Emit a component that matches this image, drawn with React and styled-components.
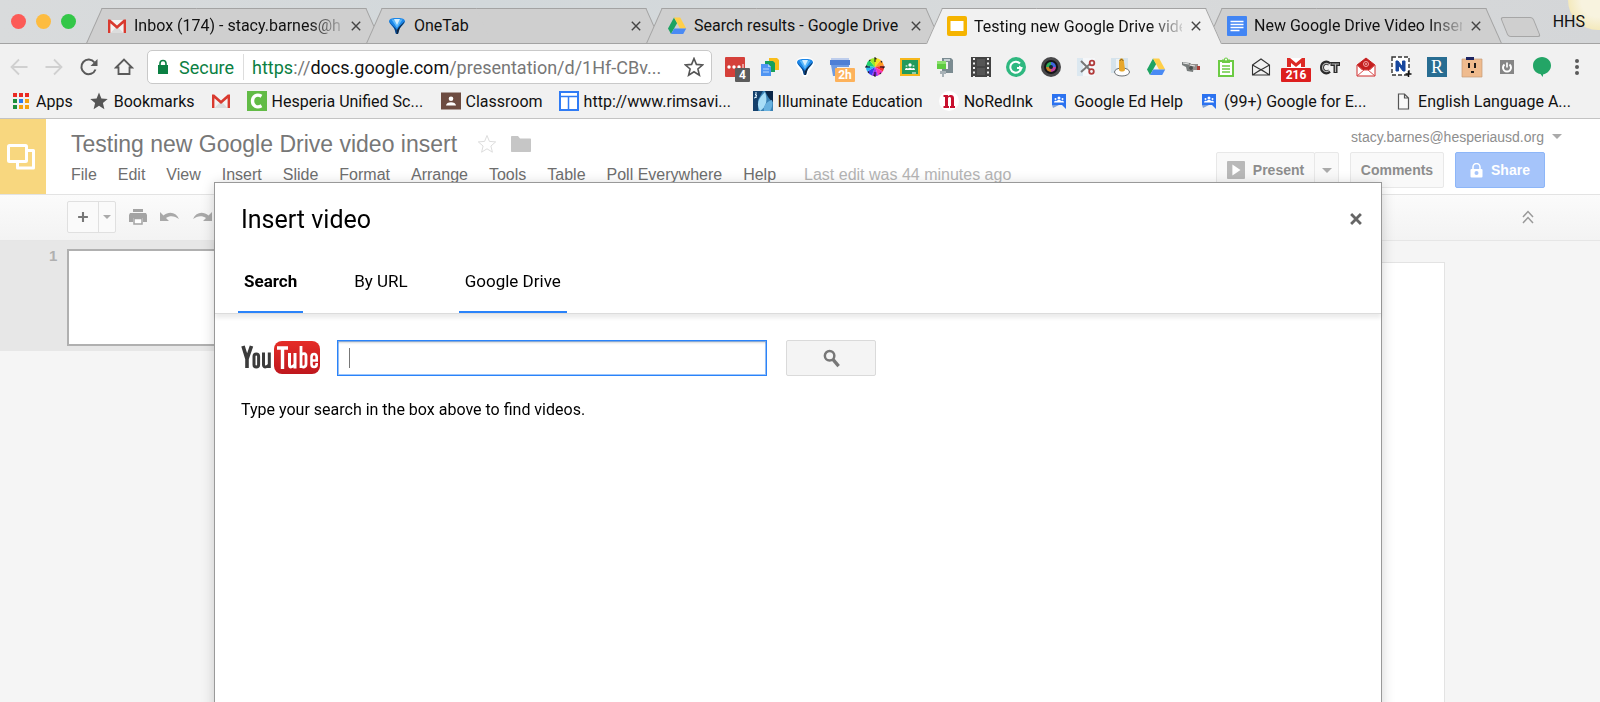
import React from 'react';
import styled, { createGlobalStyle, css } from 'styled-components';

const GlobalStyle = createGlobalStyle`
    * { box-sizing: border-box; }
    body {
        margin: 0;
        overflow: hidden;
        background: #f5f5f5;
    }
    button, input { font: inherit; color: inherit; }
    svg { display: block; flex: none; }
`;

/* ---------- icons ---------- */

function Svg({ size = 20, children, ...rest }) {
    return (
        <svg width={size} height={size} viewBox="0 0 20 20" fill="none" aria-hidden="true" {...rest}>
            {children}
        </svg>
    );
}

const GmailIcon = () => (
    <Svg>
        <path d="M1 4h18v13H1z" fill="#f3f3f3" />
        <path d="M3.500 17 9 11l1 1 1-1 5.500 6z" fill="#dcdcdc" />
        <path d="M1 3.500h2.200L10 9.600l6.800-6.100H19V17h-2.400V7.200L10 13 3.400 7.200V17H1z" fill="#d93a2f" />
    </Svg>
);

const OneTabIcon = ({ halo }) => (
    <Svg>
        {halo && <path d="M10 0c5 0 9 2 9 6 0 4-5 7-6 11-1 4-5 4-6 0C6 13 1 10 1 6c0-4 4-6 9-6z" fill="#fff" />}
        <path d="M2 5c1-3 4-3 8-3s7 0 8 3c0 3-4 5-5.500 8L11 18H9l-1.500-5C6 10 2 8 2 5z" fill="#1b86e8" />
        <path d="M2 5c1 3 4.500 5 5.500 8L9 18h1v-4C8 11 5 9 2 5z" fill="#0a3f7d" />
        <path d="M18 5c-1 3-4.500 5-5.500 8L11 18h-1v-4c1-3 4-5 8-9z" fill="#10253f" />
        <path d="M4.500 3.500h11L10 12z" fill="#5db9fa" />
        <path d="M7 3h6l-3 6z" fill="#d3eeff" />
    </Svg>
);

const DriveIcon = () => (
    <Svg>
        <path d="M7 1.500 1 12.500l3 5.500 6.200-11z" fill="#1ea362" />
        <path d="M7 1.500h6.200l6 11H13z" fill="#ffcf48" />
        <path d="M7.200 12.500h12l-3 5.500H4z" fill="#4a8af4" />
    </Svg>
);

const SlidesIcon = () => (
    <Svg>
        <rect width="20" height="20" rx="2" fill="#f5b400" />
        <path d="M3.500 5h13v10h-13z" fill="#fff" />
    </Svg>
);

const DocsIcon = () => (
    <Svg>
        <rect width="20" height="20" rx="1" fill="#4285f4" />
        <path d="M3.500 5.500h13M3.500 8.500h13M3.500 11.500h13M3.500 14.500h9" stroke="#fff" strokeWidth="1.600" />
    </Svg>
);

const AppsIcon = () => (
    <Svg>
        {['#ea2b24', '#ea2b24', '#ea2b24', '#1b8f3b', '#2a7bf0', '#f5a210', '#1b8f3b', '#f5a210', '#f5a210'].map((c, i) => (
            <rect key={i} x={2 + (i % 3) * 6} y={2 + Math.floor(i / 3) * 6} width="4" height="4" fill={c} />
        ))}
    </Svg>
);

const StarIcon = ({ fill = 'none', stroke, width = 1.6 }) => (
    <Svg>
        <path
            d="m10 1.500 2.400 5.900 6.300.5-4.800 4.100 1.500 6.200-5.400-3.400-5.400 3.400 1.500-6.200-4.800-4.100 6.300-.5z"
            fill={fill}
            stroke={stroke}
            strokeWidth={width}
        />
    </Svg>
);

const CIcon = () => (
    <Svg>
        <rect width="20" height="20" fill="#62bb46" />
        <path d="M14.500 5.200C9.500 2.500 5.500 5.500 5.500 10s4 7.500 9 4.800" stroke="#fff" strokeWidth="3.400" />
    </Svg>
);

const ClassroomMark = () => (
    <Svg>
        <path d="M0 1.500h20v17H0z" fill="#6d4c41" />
        <circle cx="10" cy="7.800" r="2.300" fill="#fff" />
        <path d="M5 14.500c0-4.500 10-4.500 10 0z" fill="#fff" />
    </Svg>
);

const SitesIcon = () => (
    <Svg>
        <path d="M1 1h18v18H1z" fill="#fff" stroke="#2f7bf5" strokeWidth="2" />
        <path d="M1 5.500h18M9.500 5.500V19" stroke="#2f7bf5" strokeWidth="1.500" />
    </Svg>
);

const IlluminateIcon = () => (
    <Svg>
        <path d="M0 0h20v20H0z" fill="#3a82b5" />
        <path d="M0 0h10L5 9v11H0z" fill="#14406c" />
        <path d="M12 0h8v11c-3-2-6-6-8-11z" fill="#0b2748" />
        <path d="M12 1C5 8 3 13 7 20c6-4 8-10 5-19z" fill="#a9def7" />
        <path d="M19 9c-6 2-9 6-8 11h6c2-3 3-7 2-11z" fill="#68b1df" />
        <path d="M2 3 4 5M1 7l3-1M3 1v5" stroke="#dff4ff" />
    </Svg>
);

const NoRedInkIcon = () => (
    <Svg>
        <circle cx="10" cy="10" r="10" fill="#fff" />
        <path d="M4.500 4H9v1.200c2-2 6-1.700 6 1.800v8h1V17h-5v-2h1V7.500c0-2-3-2-3 0V15h1v2H4.500v-2H6V6H4.500z" fill="#c8102e" />
    </Svg>
);

const GroupsIcon = () => (
    <Svg>
        <path d="M3 3h14v15l-4-4H3z" fill="#2b72f0" />
        <path d="M3 14h7l-6 3z" fill="#7da0d9" />
        <circle cx="10" cy="7" r="1.500" fill="#fff" />
        <circle cx="6.500" cy="8" r="1" fill="#fff" />
        <circle cx="13.500" cy="8" r="1" fill="#fff" />
        <path d="M5 11.500c0-2 2-2 2.500-1.500 1-1.500 4-1.500 5 0 .5-.5 2.500-.5 2.500 1.500z" fill="#fff" />
    </Svg>
);

const PageIcon = () => (
    <Svg>
        <path d="M5.500 3h6l4 4v11h-10zM11.500 3v4h4" stroke="#555" strokeWidth="1.200" fill="#fafafa" />
    </Svg>
);

const Badge = ({ x, y, w, h = 14, fill, children }) => (
    <g>
        <rect x={x} y={y} width={w} height={h} rx="1" fill={fill} />
        <text x={x + w / 2} y={y + 11} textAnchor="middle" fill="#fff" fontFamily="Roboto, sans-serif" fontWeight="700" fontSize="12">
            {children}
        </text>
    </g>
);

const extensions = [
    { name: 'Passwords', art: <>
        <rect width="20" height="20" rx="1" fill="#d5403a" />
        <circle cx="4" cy="10" r="1.700" fill="#fff" /><circle cx="9" cy="10" r="1.700" fill="#fff" /><circle cx="14" cy="10" r="1.700" fill="#fff" />
        <path d="M18 7v6" stroke="#fff" />
        <Badge x={10} y={11} w={15} fill="#5c5c5c">4</Badge>
    </> },
    { name: 'Copies', art: <>
        <path d="M9 1h8l2 2v10H9z" fill="#f9bd1b" /><path d="M5 4h8l2 2v9H5z" fill="#16a05d" />
        <path d="M1 7h7l3 3v9H1z" fill="#5095f3" /><path d="M3 12h6M3 15h6" stroke="#b8d6fb" />
        <path d="m8 7 3 3H8z" fill="#a8cbfb" />
    </> },
    { name: 'OneTab', icon: <OneTabIcon halo /> },
    { name: 'Timer', art: <>
        <path d="M0 3h20v5H0z" fill="#4e7fd5" /><path d="M1 8h18v2H7v9H3z" fill="#6e9be2" />
        <path d="M1 1h18v2H1z" fill="#bdcdec" />
        <Badge x={5} y={11} w={20} fill="#fdb25b">2h</Badge>
    </> },
    { name: 'Color wheel', art: <>
        {['#f7e11e', '#ff9a1f', '#f4332d', '#f432b8', '#9a2cf0', '#3a3cf0', '#28b6f0', '#1ed26a', '#9bea28'].map((c, i) => (
            <path key={c} d="M10 10V1a9 9 0 0 1 5.790 2.110z" fill={c} transform={`rotate(${i * 40} 10 10)`} />
        ))}
        <circle cx="10" cy="10" r="8.300" stroke="#222" strokeWidth="1.200" strokeDasharray="1.500 5" />
        <path d="M10 0v5M10 15v5M0 10h5M15 10h5" stroke="#111" />
    </> },
    { name: 'Share to Classroom', art: <>
        <path d="M0 1h20v18H0z" fill="#f5b71c" /><path d="M2 3h16v14H2z" fill="#229a5b" />
        <circle cx="10" cy="8" r="1.700" fill="#fff" /><circle cx="6.500" cy="9" r="1" fill="#a7dcbf" /><circle cx="13.500" cy="9" r="1" fill="#a7dcbf" />
        <path d="M5 13c0-2.500 2-2.500 3-1.500 1-1 3-1 4 0 1-1 3-1 3 1.500z" fill="#fff" /><path d="M12 16h4" stroke="#fff" />
    </> },
    { name: 'Screen capture', art: <>
        <path d="M7 1h9l2 2v13H7v-4h6V5H7z" fill="#7b8b91" /><path d="M9 2h6v2H9z" fill="#c5d0d4" />
        <path d="M2 4h9v8H2z" fill="#5fcb41" /><path d="M2 4h9v3H2z" fill="#8ce16f" />
        <path d="M5 14h6v3H5zM7 17h2v3H7z" fill="#a7b1b6" />
    </> },
    { name: 'Film', art: <>
        <path d="M0 0h20v20H0z" fill="#434343" />
        <path d="M3 1v19M17 1v19" stroke="#eee" strokeWidth="2" strokeDasharray="2 2.500" />
        <path d="M6 2h8v7H6zM6 11h8v7H6z" fill="#555" />
    </> },
    { name: 'Grammar', art: <>
        <circle cx="10" cy="10" r="10" fill="#2fb880" />
        <path d="M14 6.500A5.500 5.500 0 1 0 15.300 11H11" stroke="#fff" strokeWidth="2" /><path d="m13 8.500 4 2.500-4 2z" fill="#fff" />
    </> },
    { name: 'Camera', art: <>
        <circle cx="10" cy="10" r="10" fill="#48484a" /><circle cx="10" cy="10" r="7" fill="#151518" />
        <path d="M10 10V5a5 5 0 0 1 5 5z" fill="#3f67e0" /><path d="M10 10h5a5 5 0 0 1-5 5z" fill="#c4419d" />
        <path d="M10 10v5a5 5 0 0 1-5-5z" fill="#c9802a" /><path d="M10 10H5a5 5 0 0 1 5-5z" fill="#2cae58" />
        <circle cx="10" cy="10" r="2" fill="#14202c" />
    </> },
    { name: 'Snip', art: <>
        <path d="M1 1h18v18H1z" fill="#f5f7f9" /><path d="M1 1h6v18H1z" fill="#dce8f0" />
        <path d="m5 4 9 9M5 15l9-8" stroke="#777" strokeWidth="2" />
        <circle cx="16" cy="6" r="2.300" stroke="#b13c3c" strokeWidth="1.800" /><circle cx="15.500" cy="14.500" r="2.300" stroke="#b13c3c" strokeWidth="1.800" />
    </> },
    { name: 'Stamp', art: <>
        <path d="M0 1h17v15H0z" fill="#d5e3ec" /><path d="M5 2h6v9H5z" fill="#eef3f6" />
        <ellipse cx="11" cy="15" rx="7.500" ry="4" fill="#fff" stroke="#6b7074" />
        <path d="M8 13V5c0-5 5-5 5 0l1 8c-1 2-5 2-6 0z" fill="#e7a72c" /><path d="M9 4c0-2 3-2 3 0" stroke="#805d1c" />
    </> },
    { name: 'Drive', icon: <DriveIcon /> },
    { name: 'Cam', art: <>
        <path d="m1 5 8 1 4 3-1 6-6-1-1-4-4-2z" fill="#777c7b" /><path d="M8 7h9v6H8z" fill="#94908d" />
        <path d="M2 6l6 1M9 8l5 1" stroke="#e8e8e8" /><path d="M16 9h3v4h-3z" fill="#aa3e38" /><circle cx="10" cy="11" r="2" fill="#4b5050" />
    </> },
    { name: 'Clipboard', art: <>
        <path d="M3 4h14v15H3z" fill="#fff" stroke="#6ccb44" strokeWidth="2" /><path d="M6 4V2.500h2a2 2 0 0 1 4 0h2V6H6z" fill="#6ccb44" />
        <path d="M6 9h8M6 12h8M6 15h8" stroke="#6ccb44" strokeWidth="1.700" /><circle cx="10" cy="2.500" r="1" fill="#fff" />
    </> },
    { name: 'Open mail', art: (
        <path d="M1.500 8 10 2l8.500 6v10h-17zM1.500 8 13 14.500M18.500 8 7 14.500M1.500 18 10 12.500l8.500 5.500" stroke="#333" strokeWidth="1.100" />
    ) },
    { name: 'Mail checker', art: <>
        <path d="M1 1h18v11H1z" fill="#fff" /><path d="M1 1h3l6 5 6-5h3v9h-4V6l-5 4-5-4v4H1z" fill="#dd2a25" />
        <Badge x={-5} y={11} w={30} fill="#dd1f1f">216</Badge>
    </> },
    { name: 'CT', art: (
        <g>
            <path d="M8.500 7C5 4 1 6.500 1 10.500s4 6.500 7.500 3.500M9.500 7H19M14.500 7v9" stroke="#2b2b2b" strokeWidth="4" />
            <path d="M8 7.500C5 5 1.500 7 1.500 10.500s3.500 5.500 6.500 3M10.500 7H18M14.500 7v8" stroke="#b5b5b5" strokeWidth="1.200" />
        </g>
    ) },
    { name: 'Sent mail', art: <>
        <path d="M1 8 10 1l9 7v11H1z" fill="#fff" stroke="#cf2a2a" /><path d="m1 8 9-7 9 7-5 5H6z" fill="#c41f1f" />
        <path d="m1 19 7-6h4l7 6M1 8l6 5M19 8l-6 5" stroke="#d94d4d" /><circle cx="10" cy="7" r="2.500" stroke="#f2a5a5" />
        <circle cx="10" cy="7" r="1" fill="#f2a5a5" />
    </> },
    { name: 'Nimbus', art: <>
        <path d="M1 0h17v18H1z" fill="#fff" stroke="#333" strokeWidth="1.400" strokeDasharray="4 2" />
        <path d="M5 14V4h2l4.500 6V4H14v10h-2L7.500 8v6z" fill="#17479e" stroke="#17479e" /><path d="M17.500 14v6M14.500 17h6" stroke="#111" strokeWidth="1.500" />
    </> },
    { name: 'Readability', art: <>
        <path d="M0 0h20v20H0z" fill="#286d92" />
        <text x="10" y="16" textAnchor="middle" fill="#fff" fontFamily="Liberation Serif, serif" fontSize="18">R</text>
    </> },
    { name: 'Bitmoji', art: <>
        <path d="M0 2h20v18H0z" fill="#efbb8e" stroke="#c69b76" strokeWidth=".7" /><path d="M4 0h8v3H4z" fill="#1d2461" />
        <path d="M6 6h2v5H6zM12 6h2v5h-2zM9 14h3v2H9z" fill="#1d1a18" />
    </> },
    { name: 'Power', art: <>
        <path d="M3 3h14v14H3z" fill="#868686" /><path d="M7.500 7.500a4 4 0 1 0 5 0" stroke="#fff" strokeWidth="2" /><path d="M10 5.500v5" stroke="#fff" strokeWidth="1.700" />
    </> },
    { name: 'Hangouts', art: (
        <path d="M10 0c5 0 9 3.600 9 8.500 0 4.500-3.500 8-8 9V20c-1-1-2-2-2.500-3C4 16.500 1 13 1 8.500 1 3.600 5 0 10 0z" fill="#23a566" />
    ) },
];

/* ---------- browser frame ---------- */

const Page = styled.div`
    min-height: 100vh;
    display: flex;
    flex-direction: column;
    font-family: Roboto, 'Liberation Sans', sans-serif;
    font-size: 16px;
    color: #111;
`;

const TabStrip = styled.div`
    position: relative;
    display: flex;
    align-items: flex-end;
    height: 44px;
    padding: 8px 15px 0 11px;
    border-bottom: 1px solid #a3a3a3;
    background: linear-gradient(90deg, #d9dbdc, #d2d8db 30%, #d8dadb 70%, #d4d6d8);
    flex: none;
`;

const Lights = styled.div`
    display: flex;
    gap: 10px;
    align-self: flex-start;
    padding-top: 6px;
    margin-right: 10px;
`;

const Light = styled.button`
    width: 15px;
    height: 15px;
    padding: 0;
    border: 0;
    border-radius: 50%;
    background: ${(p) => p.$color};
`;

const edge = css`
    content: '';
    position: absolute;
    top: 0;
    bottom: 0;
    background: ${(p) => (p.$active ? '#f1f1f1' : '#cfcfcf')};
    border-top: 1px solid #a3a3a3;
    z-index: -1;
`;

const Tab = styled.div`
    position: relative;
    z-index: ${(p) => (p.$active ? 2 : 1)};
    flex: 0 1 296px;
    min-width: 0;
    height: ${(p) => (p.$active ? '36px' : '35px')};
    margin-bottom: ${(p) => (p.$active ? '-1px' : '0')};
    margin-right: -16px;
    padding: 0 19px 0 21px;
    display: flex;
    align-items: center;
    gap: 7px;
    isolation: isolate;
    &::before {
        ${edge}
        left: 8px;
        right: 50%;
        border-left: 1px solid #a3a3a3;
        transform: skewX(-24deg);
    }
    &::after {
        ${edge}
        left: 40%;
        right: 8px;
        border-right: 1px solid #a3a3a3;
        transform: skewX(24deg);
    }
`;

const TabTitle = styled.span`
    flex: 1;
    min-width: 0;
    overflow: hidden;
    white-space: nowrap;
    mask-image: ${(p) => (p.$fits ? 'none' : 'linear-gradient(90deg, #000 84%, rgba(0, 0, 0, 0.15))')};
`;

const IconButton = styled.button`
    display: flex;
    align-items: center;
    justify-content: center;
    padding: 0;
    border: 0;
    background: none;
    flex: none;
`;

const NewTab = styled.button`
    width: 33px;
    height: 20px;
    margin: 0 0 6px 18px;
    padding: 0;
    border: 1px solid #a6a6a6;
    border-radius: 3px;
    background: #cfcfcf;
    transform: skewX(22deg);
    flex: none;
`;

const Sun = styled.div`
    position: absolute;
    right: -28px;
    top: -30px;
    width: 60px;
    height: 60px;
    border-radius: 50%;
    background: radial-gradient(#f8f3df 40%, #f0e09b);
`;

const Profile = styled.span`
    position: relative;
    margin-left: auto;
    align-self: flex-start;
    padding-top: 4px;
    line-height: 20px;
`;

const Toolbar = styled.div`
    display: flex;
    align-items: center;
    height: 44px;
    padding: 4px 13px 2px 9px;
    background: #f1f1f1;
    flex: none;
`;

const NavButtons = styled.div`
    display: flex;
    gap: 15px;
    margin-right: 13px;
`;

const Omnibox = styled.div`
    display: flex;
    align-items: center;
    flex: 1 1 564px;
    min-width: 0;
    height: 34px;
    padding: 0 7px 0 9px;
    border: 1px solid #c9c9c9;
    border-radius: 5px;
    background: #fff;
    font-size: 18px;
`;

const Secure = styled.span`
    display: flex;
    align-items: center;
    gap: 10px;
    height: 26px;
    padding-right: 9px;
    margin-right: 8px;
    border-right: 1px solid #ddd;
    color: #0b8043;
`;

const Url = styled.span`
    flex: 1;
    white-space: nowrap;
    color: #777;
    b { font-weight: 400; color: #111; }
    i { font-style: normal; color: #0b8043; }
`;

const Extensions = styled.div`
    display: flex;
    justify-content: space-between;
    flex: 0 0 875px;
    padding-left: 13px;
    svg { overflow: visible; }
`;

const BookmarkBar = styled.nav`
    display: flex;
    align-items: center;
    gap: 16px;
    height: 31px;
    padding: 0 11px 4px;
    background: #f1f1f1;
    border-bottom: 1px solid #c3c3c3;
    white-space: nowrap;
    flex: none;
`;

const Bookmark = styled.a`
    display: flex;
    align-items: center;
    gap: 5px;
    min-width: ${(p) => (p.$long ? '178px' : '0')};
    color: inherit;
    text-decoration: none;
`;

/* ---------- slides editor ---------- */

const Header = styled.header`
    display: flex;
    height: 76px;
    background: #fff;
    border-bottom: 1px solid #e3e3e3;
    font-family: 'Liberation Sans', Arial, sans-serif;
    flex: none;
`;

const Logo = styled.div`
    width: 46px;
    padding-right: 4px;
    display: flex;
    align-items: center;
    justify-content: center;
    background: #f8d77f;
`;

const TitleBlock = styled.div`
    flex: 1;
    padding: 10px 0 0 25px;
`;

const TitleRow = styled.div`
    display: flex;
    align-items: center;
    gap: 14px;
    height: 30px;
`;

const DocTitle = styled.h1`
    margin: 0 6px 0 0;
    font-size: 23px;
    font-weight: 400;
    color: #777;
`;

const MenuRow = styled.nav`
    display: flex;
    align-items: center;
    gap: 21px;
    height: 32px;
    color: #6e6e6e;
    white-space: nowrap;
`;

const MenuItem = styled.button`
    padding: 0;
    border: 0;
    background: none;
`;

const LastEdit = styled.span`
    margin-left: 7px;
    color: #b5b5b5;
`;

const Account = styled.div`
    padding: 8px 55px 0 0;
    font-size: 14px;
`;

const Email = styled.button`
    display: flex;
    align-items: center;
    gap: 8px;
    margin: 0 -17px 6px auto;
    padding: 0;
    border: 0;
    background: none;
    height: 19px;
    color: #8e8e8e;
`;

const Caret = styled.span`
    border: ${(p) => (p.$small ? '4px' : '5px')} solid transparent;
    border-top-color: #aaa;
    border-bottom: 0;
`;

const Actions = styled.div`
    display: flex;
    height: 36px;
`;

const Action = styled.button`
    display: flex;
    align-items: center;
    justify-content: center;
    gap: 8px;
    padding: 0;
    width: ${(p) => p.$width};
    margin-left: ${(p) => (p.$joined ? '-1px' : '11px')};
    border: 1px solid #e8e8e8;
    border-radius: 2px;
    background: #f9f9f9;
    font-weight: 700;
    color: #8d8d8d;
    ${(p) => p.$primary && css`
        background: #a5c4fa;
        border-color: #8db6f8;
        color: #fff;
    `}
`;

const EditBar = styled.div`
    display: flex;
    align-items: center;
    gap: 12px;
    height: 46px;
    padding: 0 66px 2px 67px;
    background: linear-gradient(#fbfbfb, #f3f3f3);
    border-bottom: 1px solid #e6e6e6;
    flex: none;
`;

const AddGroup = styled.div`
    display: flex;
    border: 1px solid #e0e0e0;
    border-radius: 2px;
    background: #fafafa;
`;

const AddButton = styled(IconButton)`
    width: ${(p) => p.$width};
    height: 30px;
    & + & { border-left: 1px solid #e0e0e0; }
`;

const PushRight = styled(IconButton)`
    margin-left: auto;
`;

const Workspace = styled.main`
    display: flex;
    flex: 1;
    background: #f5f5f5;
`;

const Filmstrip = styled.aside`
    width: 256px;
    border-right: 1px solid #ddd;
    overflow: hidden;
`;

const SlideRow = styled.div`
    display: flex;
    align-items: flex-start;
    gap: 10px;
    padding: 8px 0 5px 49px;
    background: #e7e7e7;
    font-weight: 700;
    line-height: 14px;
    color: #b0b0b0;
    font-family: 'Liberation Sans', sans-serif;
    font-size: 15px;
`;

const Thumb = styled.div`
    width: 172px;
    height: 97px;
    border: 2px solid #b0b0b0;
    background: #fff;
    flex: none;
`;

const Slide = styled.div`
    flex: 1;
    margin: 21px 155px 0 80px;
    background: #fff;
    border: 1px solid #e3e3e3;
    border-bottom: 0;
`;

/* ---------- dialog ---------- */

const Dialog = styled.section`
    position: fixed;
    top: 182px;
    left: 214px;
    right: 218px;
    bottom: -20px;
    z-index: 10;
    background: #fff;
    border: 1px solid #999;
    box-shadow: 0 2px 12px rgba(0, 0, 0, 0.18);
    color: #000;
`;

const DialogHead = styled.div`
    display: flex;
    align-items: center;
    justify-content: space-between;
    padding: 18px 18px 0 26px;
    height: 54px;
    h2 {
        margin: 0;
        font-size: 25px;
        font-weight: 400;
    }
`;

const DialogTabs = styled.div`
    display: flex;
    gap: 45px;
    padding: 12px 23px 0;
    border-bottom: 1px solid #dcdcdc;
    box-shadow: 0 4px 4px rgba(0, 0, 0, 0.08);
`;

const DialogTab = styled.button`
    height: 64px;
    padding: 1px 6px 0;
    border: 0;
    border-bottom: 2px solid ${(p) => (p.$marked ? '#2a83fa' : 'transparent')};
    background: none;
    font-size: 17px;
    font-weight: ${(p) => (p.$bold ? 700 : 400)};
`;

const SearchForm = styled.form`
    display: flex;
    align-items: center;
    padding: 26px 26px 22px;
`;

const SearchInput = styled.input`
    flex: 0 1 430px;
    height: 36px;
    margin: 0 19px 0 16px;
    padding: 0 10px;
    border: 1px solid #2a83fa;
    outline: 0;
    background: linear-gradient(#777, #777) 11px 50% / 1px 20px no-repeat #fff;
    box-shadow: inset 0 2px 2px rgba(0, 0, 0, 0.15), inset 0 0 0 1px #9cc5fb;
    caret-color: transparent;
`;

const SearchButton = styled.button`
    display: flex;
    align-items: center;
    justify-content: center;
    width: 90px;
    height: 36px;
    border: 1px solid #dadada;
    border-radius: 2px;
    background: #f4f4f4;
`;

const Hint = styled.p`
    margin: 0;
    padding: 0 26px;
    line-height: 24px;
`;

const tabs = [
    { title: 'Inbox (174) - stacy.barnes@h', icon: <GmailIcon /> },
    { title: 'OneTab', icon: <OneTabIcon />, fits: true },
    { title: 'Search results - Google Drive', icon: <DriveIcon />, fits: true },
    { title: 'Testing new Google Drive vide', icon: <SlidesIcon />, active: true },
    { title: 'New Google Drive Video Inser', icon: <DocsIcon /> },
];

const bookmarks = [
    ['Apps', <AppsIcon />],
    ['Bookmarks', <StarIcon fill="#555" />],
    ['', <GmailIcon />],
    ['Hesperia Unified Sc...', <CIcon />],
    ['Classroom', <ClassroomMark />],
    ['http://www.rimsavi...', <SitesIcon />],
    ['Illuminate Education', <IlluminateIcon />],
    ['NoRedInk', <NoRedInkIcon />],
    ['Google Ed Help', <GroupsIcon />],
    ['(99+) Google for E...', <GroupsIcon />],
    ['English Language A...', <PageIcon />],
];

const menus = ['File', 'Edit', 'View', 'Insert', 'Slide', 'Format', 'Arrange', 'Tools', 'Table', 'Poll Everywhere', 'Help'];

const navIcons = [
    ['Back', <path d="M18.500 10H3M10 2.500 2.500 10l7.500 7.500" stroke="#d0d0d0" strokeWidth="1.800" />],
    ['Forward', <path d="M1.500 10H17M10 2.500l7.500 7.500-7.500 7.500" stroke="#d0d0d0" strokeWidth="1.800" />],
    ['Reload', <>
        <path d="M16.500 12.500A7.300 7.300 0 1 1 15.500 5.500" stroke="#5a5a5a" strokeWidth="2" />
        <path d="M18.500 2v7h-7z" fill="#5a5a5a" />
    </>],
    ['Home', <path d="M2 10.500 10 2.500l8 8h-2.500V17h-11v-6.500z" stroke="#5a5a5a" strokeWidth="1.800" />],
];

function YouTubeLogo() {
    return (
        <svg width="80" height="36" viewBox="0 0 80 36" role="img" aria-label="YouTube">
            <defs>
                <linearGradient id="tube" x1="0" y1="0" x2="0" y2="1">
                    <stop offset="0" stopColor="#e52d27" />
                    <stop offset="1" stopColor="#bf171d" />
                </linearGradient>
            </defs>
            <rect x="33" y="1" width="46" height="33" rx="8" fill="url(#tube)" />
            <g strokeWidth="3.600" stroke="#3b3b3b" fill="none">
                <path d="m2 6 4 13v9M10.500 6 6 19" />
                <rect x="13" y="14" width="4.600" height="13" rx="2.300" strokeWidth="3" />
                <path d="M22.500 12.500V25c0 3 4 2 5.500 0M28.300 12.500V28" strokeWidth="3" />
            </g>
            <g strokeWidth="3" stroke="#fff" fill="none">
                <path d="M36 8h11M41.500 8v21" strokeWidth="3.400" />
                <path d="M48.500 13v12c0 3 3 2 5 0M54 13v15.500" />
                <path d="M60 6v22M60 15c2-2 5-2 5 1v8c0 3-3 4-5 2" strokeWidth="2.800" />
                <path d="M70.500 20.500h5.200V17c0-4-5.200-4-5.200 0v7c0 4 5.200 4 5.200 0v-1" strokeWidth="2.600" />
            </g>
        </svg>
    );
}

export default function App() {
    return (
        <Page>
            <GlobalStyle />
            <TabStrip>
                <Lights>
                    <Light $color="#fc5b57" aria-label="Close window" />
                    <Light $color="#fdbc40" aria-label="Minimize window" />
                    <Light $color="#33c748" aria-label="Zoom window" />
                </Lights>
                {tabs.map((tab) => (
                    <Tab key={tab.title} $active={tab.active}>
                        {tab.icon}
                        <TabTitle $fits={tab.fits}>{tab.title}</TabTitle>
                        <IconButton aria-label={`Close ${tab.title}`}>
                            <Svg size={14}><path d="m4 4 12 12M16 4 4 16" stroke="#444" strokeWidth="2" /></Svg>
                        </IconButton>
                    </Tab>
                ))}
                <NewTab aria-label="New tab" />
                <Sun />
                <Profile>HHS</Profile>
            </TabStrip>

            <Toolbar>
                <NavButtons>
                    {navIcons.map(([label, art]) => (
                        <IconButton key={label} aria-label={label}><Svg>{art}</Svg></IconButton>
                    ))}
                </NavButtons>
                <Omnibox>
                    <Secure>
                        <svg width="12" height="16" viewBox="0 0 12 16">
                            <path d="M1 6h10v9H1z" fill="#0b8043" />
                            <path d="M3 7V4.500a3 3 0 0 1 6 0V7" stroke="#0b8043" strokeWidth="1.600" fill="none" />
                        </svg>
                        Secure
                    </Secure>
                    <Url><i>https</i>://<b>docs.google.com</b>/presentation/d/1Hf-CBv...</Url>
                    <IconButton aria-label="Bookmark this page"><StarIcon stroke="#555" /></IconButton>
                </Omnibox>
                <Extensions>
                    {extensions.map((ext) => (
                        <IconButton key={ext.name} aria-label={ext.name}>{ext.icon || <Svg>{ext.art}</Svg>}</IconButton>
                    ))}
                    <IconButton aria-label="Menu">
                        <Svg>
                            <circle cx="10" cy="4" r="2" fill="#5a5a5a" />
                            <circle cx="10" cy="10" r="2" fill="#5a5a5a" />
                            <circle cx="10" cy="16" r="2" fill="#5a5a5a" />
                        </Svg>
                    </IconButton>
                </Extensions>
            </Toolbar>

            <BookmarkBar>
                {bookmarks.map(([label, icon], i) => (
                    <Bookmark key={i} href="#" aria-label={label || 'Gmail'} $long={label.endsWith('...')}>
                        {icon}
                        {label && <span>{label}</span>}
                    </Bookmark>
                ))}
            </BookmarkBar>

            <Header>
                <Logo>
                    <svg width="28" height="26" viewBox="0 0 28 26" fill="none" stroke="#fff" strokeWidth="3">
                        <path d="M20 6.500h6.500v17.500H10.500v-6" strokeLinejoin="round" />
                        <rect x="1.500" y="1.500" width="18" height="16" rx="1" />
                    </svg>
                </Logo>
                <TitleBlock>
                    <TitleRow>
                        <DocTitle>Testing new Google Drive video insert</DocTitle>
                        <IconButton aria-label="Star"><StarIcon stroke="#ddd" width={1} /></IconButton>
                        <IconButton aria-label="Move to folder">
                            <Svg><path d="M0 3c0-1 .5-1 1-1h6l2 2.500h10c.6 0 1 .4 1 1V17c0 .6-.4 1-1 1H1c-.6 0-1-.4-1-1z" fill="#c6c6c6" /></Svg>
                        </IconButton>
                    </TitleRow>
                    <MenuRow>
                        {menus.map((m) => <MenuItem key={m}>{m}</MenuItem>)}
                        <LastEdit>Last edit was 44 minutes ago</LastEdit>
                    </MenuRow>
                </TitleBlock>
                <Account>
                    <Email>stacy.barnes@hesperiausd.org <Caret /></Email>
                    <Actions>
                        <Action $width="99px">
                            <Svg size={18}>
                                <rect width="20" height="20" rx="1" fill="#b9b9b9" />
                                <path d="M6 4v12l9-6z" fill="#fff" />
                            </Svg>
                            Present
                        </Action>
                        <Action $width="25px" $joined aria-label="Present options"><Caret /></Action>
                        <Action $width="94px">Comments</Action>
                        <Action $width="90px" $primary>
                            <svg width="13" height="15" viewBox="0 0 13 15">
                                <path d="M3 7V4a3.500 3.500 0 0 1 7 0v3" stroke="#fff" strokeWidth="1.500" fill="none" />
                                <rect x=".5" y="6" width="12" height="8.500" rx="1" fill="#fff" />
                                <circle cx="6.500" cy="10" r="2" fill="#a5c4fa" />
                            </svg>
                            Share
                        </Action>
                    </Actions>
                </Account>
            </Header>

            <EditBar>
                <AddGroup>
                    <AddButton $width="30px" aria-label="New slide">
                        <Svg size={14}><path d="M10 3v14M3 10h14" stroke="#777" strokeWidth="3" /></Svg>
                    </AddButton>
                    <AddButton $width="17px" aria-label="New slide layout"><Caret $small /></AddButton>
                </AddGroup>
                <IconButton aria-label="Print">
                    <Svg>
                        <path d="M5 2h10v3H5zM2 6h16l1 2v7h-4v-4H5v4H1V8z" fill="#a4a4a4" />
                        <path d="M6 11.500h8V17H6z" stroke="#a4a4a4" strokeWidth="1.500" fill="#fff" />
                    </Svg>
                </IconButton>
                <IconButton aria-label="Undo">
                    <Svg><path d="M0 5v9h9l-3-3c4-3 9-2 13 1C16 5 9 4 3.500 8.500z" fill="#a9a9a9" /></Svg>
                </IconButton>
                <IconButton aria-label="Redo">
                    <Svg><path d="M20 5v9h-9l3-3c-4-3-9-2-13 1C4 5 11 4 16.500 8.500z" fill="#a9a9a9" /></Svg>
                </IconButton>
                <PushRight aria-label="Hide menus">
                    <svg width="12" height="14" viewBox="0 0 12 14" fill="none" stroke="#999" strokeWidth="1.500">
                        <path d="m1 7 5-5.500L11 7M1 13l5-5.500 5 5.500" />
                    </svg>
                </PushRight>
            </EditBar>

            <Workspace>
                <Filmstrip>
                    <SlideRow>
                        <span>1</span>
                        <Thumb />
                    </SlideRow>
                </Filmstrip>
                <Slide />
            </Workspace>

            <Dialog role="dialog" aria-labelledby="dialog-title">
                <DialogHead>
                    <h2 id="dialog-title">Insert video</h2>
                    <IconButton aria-label="Close">
                        <Svg size={14}><path d="m3 3 14 14M17 3 3 17" stroke="#666" strokeWidth="4" /></Svg>
                    </IconButton>
                </DialogHead>
                <DialogTabs role="tablist">
                    <DialogTab role="tab" $bold $marked>Search</DialogTab>
                    <DialogTab role="tab">By URL</DialogTab>
                    <DialogTab role="tab" $marked>Google Drive</DialogTab>
                </DialogTabs>
                <SearchForm onSubmit={(evt) => evt.preventDefault()}>
                    <YouTubeLogo />
                    <SearchInput aria-label="Search YouTube" name="query" type="text" autoFocus />
                    <SearchButton aria-label="Search">
                        <Svg size={19}>
                            <circle cx="8" cy="7" r="5" stroke="#777" strokeWidth="2.600" />
                            <path d="m11.500 11 6 7" stroke="#777" strokeWidth="3.500" />
                        </Svg>
                    </SearchButton>
                </SearchForm>
                <Hint>Type your search in the box above to find videos.</Hint>
            </Dialog>
        </Page>
    );
}
